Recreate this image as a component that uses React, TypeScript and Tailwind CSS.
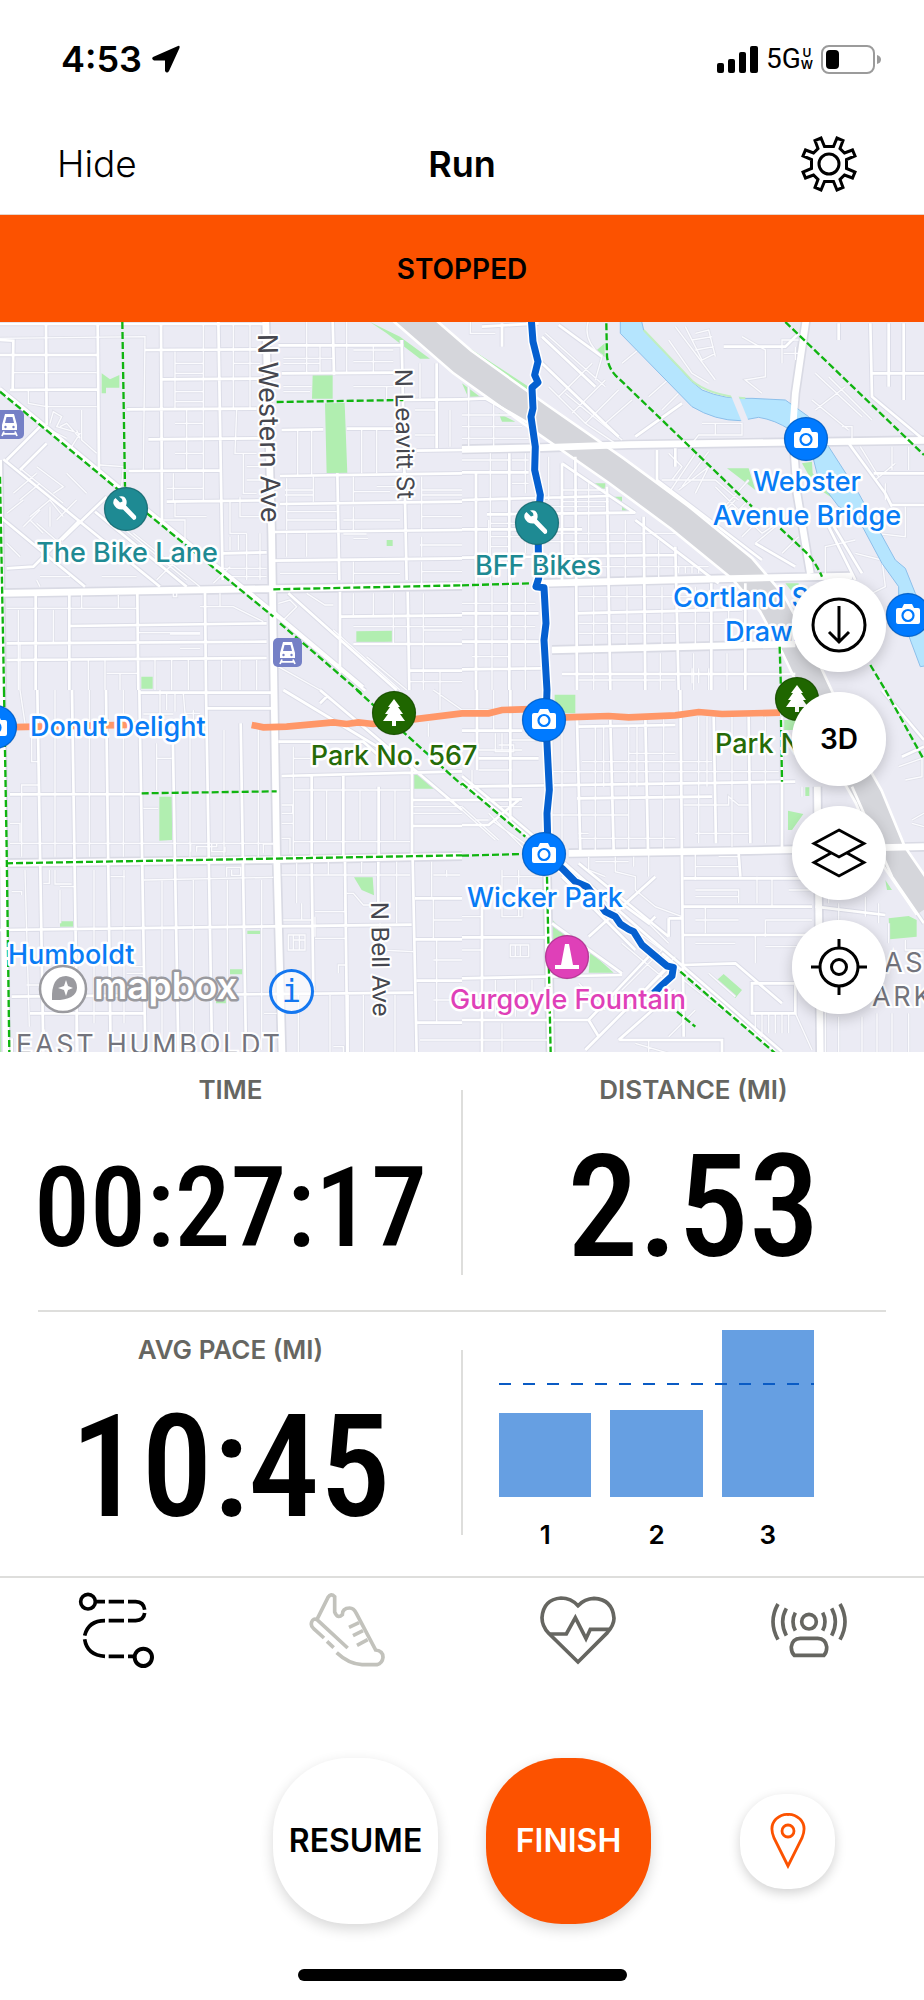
import React from 'react';

/* ---------- Map data ---------- */

// The street tiles are drawn at 3x and scaled down.
const TILE = 'scale(0.33333)';

type Tile = {
  origin: string;
  major: string;
  streets: string;
  alleys: string;
  parks: string;
};

const tiles: Tile[] = [
  {
    origin: 'translate(0 -6)',
    major: 'M0 820L815 806L1386 797M797 0L815 640L822 1110M-4 420L6 1110',
    streets:
      'M0 205L380 518L830 882L1090 1100M6 217L386 530L836 894L1096 1112M0 12H790M138 10L140 315M293 10L297 450M483 10L486 600M655 0L668 780M0 105H293M30 210L293 208M435 90L790 88M486 178L780 176M380 268L770 266M445 358L780 355M386 453L660 451M500 545L800 541M670 700L800 697M835 76L1210 76M845 160L1180 158M1205 240L1386 238M845 330L970 328M1040 326L1180 326M1250 392L1386 390M840 468L1386 460M840 552L1386 545M820 636L1386 630M820 722L1386 715M998 0L1002 165M1012 460L1018 780M1205 60L1220 780M1310 130V385M212 918L800 910M20 970L800 965M20 1020L800 1014M107 825V1110M208 825V1110M412 822L415 1110M615 818L618 1110M1020 815V1060M1223 815L1228 1110M1020 890L1386 886M1060 972H1386M1228 1052H1386M10 418L480 800M0 590L255 800M285 575L560 800M120 320L20 420M320 530L185 660M240 600L100 740L20 745M865 820L1190 1110M140 370L60 450M0 60L40 62L38 210',
    alleys:
      'M0 55L435 50L430 450M40 158H290M85 210V250L140 260H290M525 95V265M610 10V265M700 10V265M750 10V265M525 130H610M525 160H610M700 130H780M525 215H610M525 245H610M560 270V450M610 270V450M710 270L705 400H770M525 310H610M525 400H610M520 460V545M610 455V545M500 505H610M525 545V590H620M555 600V660M490 600H555V655M690 545V640H740M730 400V520H770M740 440H780M740 480H780M720 530V590H780M690 650V690M715 645V690M670 745H800M680 770H800M740 640V780M780 640V780M920 0V160M960 76V160M1040 0V160M1120 76V160M850 115H1000M850 130H960M1060 90H1180M1060 125H1180M850 200H935M850 215H930M1060 200H1180M893 330V465M935 330V465M1085 330V460M1130 330V460M1160 200V240M1260 130V235M1350 270V380M1245 270H1310M1245 345H1305M860 475V630M940 470V545M855 510H940M855 525H940M1060 470V545M1130 500H1210M1060 515H1170M1265 470V630M1265 510H1386M1265 525H1386M1060 560V630M860 575H1010M860 600H1010M1030 600H1200M1265 590H1386M1030 642H1100M1060 655H1104M1265 650V710M1260 675H1386M860 640V710M920 640V710M1060 725V790M1265 725V790M840 760H1010M1060 760H1200M1265 755H1386M55 870V1110M160 870V970M20 865H410M245 825V865M355 825V865M660 820V860H600M620 860H700L790 905M520 820V830H530V820M60 970V1110M415 938H600M510 942H600M540 985H600M265 1020V1110M315 1020V1110M360 1060V1110M320 1060H412M465 1020V1110M515 1020V1110M565 1020V1110M665 1020V1110M720 1020V1110M770 1020V1110M835 1040L960 1110M835 850L870 840L890 860L845 905M920 820L975 855H1000M1060 820V885M1120 820V885M1180 820V970M1270 820V1050M1060 920H1386M1270 930H1386M1100 1010L1220 1110M1000 930L1200 1110M1270 1050V1110M1320 1050V1110M1230 1085H1386M60 445L190 550M40 520L110 460M60 540L120 490M110 440L190 500L160 520M200 460L260 520M230 540L170 600M90 590L150 540L190 590M70 620L120 570M130 640L90 600M150 560V620M20 580L70 540M20 670L60 710M110 610L190 680M150 310L160 275L185 290L170 320L240 340L215 380M180 320L200 310L240 355L230 330M245 270V360L290 400M150 330L200 355M300 435L370 440L365 500M340 600L560 780M400 640L600 800M110 780L120 800M120 770H210M305 770H410M520 730L470 780M690 740L640 790',
    parks: 'M305 220V160L330 178L358 165V203H318V220ZM938 165L998 164V236H936ZM975 250L1034 249L1042 460L980 461ZM1160 660H1178V678H1160ZM1069 934L1179 932V965L1069 968ZM424 1070H458V1106H424ZM1110 6L1200 50L1290 116H1260L1160 40Z',
  },
  {
    origin: 'translate(1386 -6)',
    major: 'M0 388L240 383L500 374L1386 361M1032 0L1000 220L992 330L1005 520L1045 760M235 790L700 778L1170 768M270 990L1000 972',
    streets:
      'M0 238L70 235L200 310M0 457H200M0 540L440 528M75 583L520 578M0 628H360M0 713L640 705M0 880H230M0 965H230M0 1048L240 1045M42 455V1110M142 400V1110M300 430V780M340 410L345 1110M435 500L445 1110M545 590L550 1110M640 680L650 1110M748 790V1110M850 790V1110M340 880L840 868M300 1062H1000M230 120L470 350M290 15L420 110M60 20L230 10M120 80V10M520 350L660 250M1225 10L1230 230L1386 360M1230 160H1386M1130 10V60M1325 10V240M1280 10V200M1160 370L1270 520L1290 560M1235 460H1386M1290 555H1386M585 390V480L900 720M640 385V440M785 80H970L1010 40M240 50L400 200M1100 620L1180 780M1080 560L1200 760M880 670L1000 740M520 600L770 790M300 430L520 580',
    alleys:
      'M25 0V40H100M20 200V380M95 250V380M0 285H180M0 320H180M0 355H200M85 400V780M190 400V520M0 420H140M150 420H200M150 490H200M80 600V700M190 600V700M85 610H220M85 650H200M85 680H140M260 410V540M380 490V700M300 510H430M300 545H440M255 560H430M255 640H640M255 665H540M490 600V780M590 660V780M300 740H740M395 800V980M495 800V980M600 800V980M700 800V980M800 800V980M350 830H850M350 910H850M350 940H640M90 800V1110M190 800V1110M0 850H220M0 920H220M395 1000V1110M595 1000V1110M695 1000V1110M795 1000V1110M30 1010H140M350 1080H640M690 1045V1090M710 1045V1090M740 1045V1110M650 740V760M670 740V760M690 740V760M710 740V760M250 40L430 200M390 130L290 230M430 180L330 280M470 210L370 310M510 240L430 310M260 200L370 310L460 370M310 220L480 360M480 130L540 80M560 230L640 160M600 270L650 220M720 310H840V345H710L690 370M760 310V345M640 20L760 180M670 20L720 120L760 100M700 40L740 30L760 110M690 60L750 50M700 90L755 80M620 60L690 160L740 190M960 130V60H1010M1000 80V120M965 100H1010M1060 160L1200 290M1100 170L1230 300M1150 200L1060 270M1140 320H1170V360M1050 240L1160 330M620 400L660 440L630 480M700 400L620 520M740 395L660 500M740 440L700 520M600 480H760L830 540M650 510L740 440M860 480L770 580M820 540L740 620M760 500L900 640M800 600L860 540M900 640L960 600M840 650L900 590M880 670L940 620M960 700L1010 650M1090 780V680L1180 660M1180 700L1260 720L1270 800L1210 830M1240 480L1300 430M1270 490V540M1195 380L1250 470M1340 380V450M1290 380V450M1330 560V650L1240 640M380 0Q360 60 420 110L400 180M840 50L910 90V170L850 180L900 220',
    parks: 'M395 98L428 70V110ZM795 445H860L880 510ZM1020 430L1050 425L1052 460L1120 540L1060 500ZM0 70L200 200V235ZM540 485L800 690L720 640ZM390 490L430 490V530H480V572H520ZM0 190L60 235H20ZM110 280L160 305H120ZM240 290L380 370V380ZM410 395L540 500ZM970 790H1010V840Z',
  },
  {
    origin: 'translate(0 1104)',
    major: 'M822 0L830 500L846 1090M0 520L830 509L1386 498M4 0L18 1090',
    streets:
      'M112 0L130 1085M216 0L232 1085M318 0L332 1085M418 0L436 1085M518 120L535 1085M618 0L636 1085M722 100L738 1085M30 313L420 312M0 720L1235 704M35 920L1240 908M420 8H820M835 155H1090L1140 200M845 258L1386 244M935 258V500M1030 258V500M1136 290V500M1236 200V500M935 520L940 900M1035 515L1042 1090M1135 515V640M1238 510L1250 1090M850 0L1240 235M960 0L1386 360M1240 330H1386M1240 408H1386M1245 625H1386M1245 748H1386M1250 872H1386M1252 998H1386M35 1045V1090M90 970H430M230 920V1085M620 55H820M980 20L960 40',
    alleys:
      'M60 0L75 100M95 120V215H115M65 500V285H115M165 0V500M268 0V500M370 0V500M470 160V300M470 205H515M570 120V500M672 120V500M775 120V500M30 460H820M30 400H60V455M572 485V460M590 485V470H650V460M635 460V485H675V470M790 490V462H820M430 355H475M480 0V80M500 10V60M525 10V65M550 10L555 70H600M430 72H520M580 60V100M75 540L88 1010M148 540V580H130M165 540V582H215M180 590H225V670M180 600V700M282 540V1000M372 540V1000M332 560H375M486 570V1080M580 570V1080M682 570V1080M785 570V1080M432 570L820 562M680 560V532H722V556H695V540M845 345H878V370H845M845 400H878M845 445H870V490M880 170V500M880 300H1230M880 455H1230M980 298V450M1080 300V450M1185 300V450M880 205H930M845 555H1230M985 515V555M1085 515V550M1190 515V700M850 690H905V640M945 665H1035V620M890 690H935M865 735H915V780H865V735ZM880 735V780M898 735V780M880 750H915M945 745H1035M945 680V740M890 520V640M1040 610H1060L1090 645H1130M1140 700V780L1240 785M990 915V1090M1045 915V1090M1090 915V1090M1185 915V1090M895 915V1090M1015 850V825H1035M1240 350H1386M1240 370H1386M1300 0L1386 60M1285 100V140M1320 0V60M1295 515V620M1340 540V560M1300 555H1380M1300 690H1386M1300 625V750M1300 810H1386M1310 750V870M1300 930H1386M1310 875V995M1260 1050H1386M380 850H430M390 830H430M80 885H120M35 605H65V615M792 970H830M1000 1070H1030V1090',
    parks: 'M478 320H516V450L478 452ZM1238 254H1270L1318 296H1240ZM1062 562H1118L1122 616L1085 600ZM180 694H220V710H180ZM742 722H782V732H742ZM690 838H727V853H690ZM648 918H684V940H648ZM0 550L8 700L6 1090H0Z',
  },
  {
    origin: 'translate(1386 1104)',
    major: 'M320 490L860 482L1386 470M1066 290L1075 1090M255 560L266 1090',
    streets:
      'M0 258L200 425L560 740L960 1085M0 274L200 441M600 790L940 1085M45 0V240M145 0V400M345 90L355 480M445 90L455 480M550 80L558 480M655 0L665 1040M755 80L762 460M860 80L865 460M960 80V480M0 290L1000 275M350 110L640 105M0 122H180M50 205H230M0 330L180 328M345 325L750 320M0 405H80L170 330M665 565H1060M665 650H1050M665 735H1050M665 825L820 820L960 940M60 650V1090M0 742H250M0 865L480 855M265 860V745M830 490L835 560M0 990H380L560 800M1060 650L1270 675M1090 740H1110M1260 0L1386 150M1320 200L1386 170M300 560L520 780M350 520L620 740M620 685V740M620 685H660M450 620L560 700L580 680M380 740L580 560M270 700L480 850M420 640L520 730M370 1080L620 830M410 1040L380 990M470 1050L640 900M470 1050H780V1090M870 880H1000V970H870ZM1170 290L1290 560L1386 700',
    alleys:
      'M95 0V120M100 130V185H155V165H110M120 130V180M0 60H150M50 180H180M50 240H150M30 240V320M145 150H230M270 110V480M300 110V480M400 110V480M425 110V290M500 110V480M525 110V290M605 80V480M710 80V460M735 80V290M810 80V470M910 80V460M270 245H950M270 375H500M270 325V290M665 345H800V320L830 345H860M350 445H640M350 430H380M700 430H860M500 190H640M360 215H750M0 360L100 450M0 350L110 450M110 350H180M80 370L190 480M95 395L200 470M40 390H80M380 500V540L430 560M460 500V545L520 560V600L580 650L660 680M515 500V530M400 515H500M560 490V560M700 490V570M830 500H770M700 530H830M700 600H830V640M700 620H830M700 690H830M700 760H820M730 650V730M885 560V640M930 565V650M980 600H1050M910 690H1050M910 740V690M910 770H1050M880 735V820M120 540V680H180V650M120 640H240M160 600H240M120 560H240M170 680V540M145 765H200V800H145ZM160 765V800M175 765V800M0 680H60M0 780H60M100 870V980M160 870V980M210 870V980M0 930H250M0 1050H260M120 1000V1090M350 880L430 960M480 760L600 860M520 720L600 780M560 700L620 760M600 780L480 900M640 800L500 950M700 960L620 1040M560 1050V1090M520 1060L620 1090M700 880L790 950M740 850L820 920M665 870L780 960M880 970V1020L900 1040M900 970V1030M920 970V1030M940 970V1030M960 970V1030M980 970V1030M1000 970L1050 1080M1090 940V1090M1130 980V1090M1200 980V1090M1245 970V1090M1290 970V1090M1340 970V1090M1100 520V640M1130 640V700M1210 620V680M1250 640V700M1310 230L1380 205V260L1330 270M1350 390L1386 370M1350 400L1386 410M1020 290V320M1280 700V760M1330 750V780H1386',
    parks: 'M278 14H340V70H310L278 30ZM272 690L320 740H290L272 750ZM385 785L455 848H380ZM765 870L785 852L840 900L820 924ZM1280 685L1340 678L1364 690V740L1284 748ZM978 362L1024 372L990 420H978ZM955 90H1010V120H955ZM1030 292H1042V318H1030ZM1270 570L1290 600H1275Z',
  },
];

const bikePaths = [
  { origin: 'translate(0 -6)', d: 'M367 6L375 500M0 215L380 530L820 890M840 910L1090 1125M830 246L1210 240M820 808L1386 796M0 470L12 1110' },
  { origin: 'translate(1386 -6)', d: 'M0 796L205 790M433 10L435 110Q440 150 470 175L870 560M955 625L1030 695Q1060 725 1080 770M970 6L1386 405M953 980L957 1110M1225 1035L1270 1110' },
  { origin: 'translate(0 1104)', d: 'M12 0L20 480L28 1090M425 310L830 304M18 520L1386 496M1070 0L1386 285' },
  { origin: 'translate(1386 1104)', d: 'M0 280L190 440M0 497L180 492M255 560L266 1090M957 90L960 275M655 845L940 1090M645 965L700 1010M1270 0L1386 210' },
];

const RAILWAY =
  'M-190 -40L0 125L230 290L460 450L650 590L840 745L930 850L1000 980L1080 1150L1140 1290L1220 1430L1290 1600L1400 1760';

const ROUTE =
  'M208 0L213 65L228 125L218 165L228 187L210 203L213 265L207 290L220 380L218 450L235 525L228 600L230 775L222 800L246 803L252 910L246 960L255 1110L252 1210L262 1410L255 1480L257 1550L247 1600L300 1645L340 1685L375 1700L430 1775L460 1790L475 1812L500 1828L515 1835L540 1875L615 1938L634 1942L630 1968L600 1995L575 2020';

type LabelProps = { x: number; y: number; color: string; middle?: boolean; children: string };

const PlaceLabel: React.FC<LabelProps> = ({ x, y, color, middle, children }) => (
  <text
    x={x}
    y={y}
    fill={color}
    textAnchor={middle ? 'middle' : 'start'}
    stroke="#fff"
    strokeWidth="5"
    strokeLinejoin="round"
    paintOrder="stroke"
    className="text-[27px] font-medium"
  >
    {children}
  </text>
);

type PinProps = { x: number; y: number; color: string; children: React.ReactNode };

const Pin: React.FC<PinProps> = ({ x, y, color, children }) => (
  <g transform={`translate(${x} ${y})`}>
    <circle r="22" fill={color} />
    <circle r="21.5" fill="none" stroke="#000" strokeOpacity="0.18" strokeWidth="1.5" />
    {children}
  </g>
);

const Camera = () => (
  <>
    <path d="M-10 -7H-6L-4 -11H4L6 -7H10Q12 -7 12 -5V7Q12 9 10 9H-10Q-12 9 -12 7V-5Q-12 -7 -10 -7Z" fill="#fff" />
    <circle cy="0.5" r="5.5" fill="none" stroke="#007aff" strokeWidth="2.2" />
  </>
);

const WrenchGlyph = () => (
  <path
    d="M-12.500 -5Q-13.500 -9 -10.500 -11L-6 -6.500L-3.500 -7.500L-4 -10L-7 -12.500Q-1 -14 0.500 -8.500Q1 -6 0 -3.500L10 7Q11 11 7.500 11L-3 0.500Q-10 1 -12.500 -5Z"
    fill="#fff"
  />
);

const Tree = () => (
  <path d="M0 -14L6 -6H4L9 1H6L11 8H2V13H-2V8H-11L-6 1H-9L-4 -6H-6Z" fill="#fff" />
);

const Station: React.FC<{ x: number; y: number }> = ({ x, y }) => (
  <g transform={`translate(${x} ${y})`}>
    <rect width="29" height="29" rx="5" fill="#7580c6" />
    <path d="M10 4H19L22 15V20H7V15Z" fill="#fff" />
    <path d="M11.500 7H17.500L19 13H10Z" fill="#7580c6" />
    <circle cx="10.500" cy="17" r="1.200" fill="#7580c6" />
    <circle cx="18.500" cy="17" r="1.200" fill="#7580c6" />
    <path d="M9 21.500L7 26M20 21.500L22 26M8 23.800H21" stroke="#fff" strokeWidth="1.800" />
  </g>
);

const StreetMap = () => (
  <svg
    viewBox="0 0 924 730"
    preserveAspectRatio="xMidYMid slice"
    className="block h-[730px] w-full font-['Inter',sans-serif]"
    role="img"
    aria-label="Route map"
  >
    <rect width="924" height="730" fill="#ebebf4" />
    <g transform={TILE} fill="none">
      {tiles.map((t) => (
        <g key={t.origin} transform={t.origin}>
          <path d={t.parks} fill="#b1eeb0" />
          <path d={t.alleys} stroke="#e0e1ea" strokeWidth="9" />
          <path d={t.streets} stroke="#dcdde8" strokeWidth="14" />
          <path d={t.major} stroke="#d9dae4" strokeWidth="30" />
          <path d={t.alleys} stroke="#fbfbfe" strokeWidth="4" />
        </g>
      ))}

      {/* North branch of the river */}
      <g transform="translate(1386 -6)">
        <path
          d="M475 0V40L690 260Q760 302 835 302L890 292Q940 300 985 330L1050 400L1070 480L1130 560L1180 580L1260 730L1310 800L1310 860L1345 960L1375 1040L1400 1036V900L1360 820L1330 745L1300 720L1190 520L1100 380L1040 290L970 240L870 235Q790 240 720 210L690 185L545 30L538 0Z"
          fill="#b5e5fe"
          stroke="#8dbfea"
          strokeWidth="3"
        />
        <path d="M545 30L690 182Q740 225 850 235" stroke="#c0efc0" strokeWidth="6" />
        <path d="M815 220L850 305" stroke="#ebebf4" strokeWidth="20" />
        <path d={RAILWAY} stroke="#fff" strokeWidth="94" />
        <path d={RAILWAY} stroke="#d5d6db" strokeWidth="78" />
      </g>

      {tiles.map((t) => (
        <g key={t.origin} transform={t.origin} stroke="#fff">
          <path d={t.streets} strokeWidth="8" />
          <path d={t.major} strokeWidth="20" />
        </g>
      ))}

      {bikePaths.map((p) => (
        <path key={p.origin} transform={p.origin} d={p.d} stroke="#10b410" strokeWidth="7" strokeDasharray="21 9" />
      ))}

      {/* Segment and recorded route */}
      <path
        d="M0 1216L420 1208M755 1209L790 1216L860 1214L1000 1201L1040 1206L1075 1201L1120 1206L1240 1192L1386 1174L1466 1174L1506 1164L1631 1160L1696 1186L1826 1182L1886 1186L2026 1180L2096 1170L2166 1176L2340 1172"
        stroke="#ff9768"
        strokeWidth="20"
      />
      <path transform="translate(1386 -6)" d={ROUTE} stroke="#fff" strokeWidth="30" strokeLinejoin="round" />
      <path transform="translate(1386 -6)" d={ROUTE} stroke="#0560d0" strokeWidth="21" strokeLinejoin="round" />
    </g>

    <Station x={-5} y={88} />
    <Station x={273} y={316} />

    <g fill="#46474f" stroke="#fff" strokeWidth="4" paintOrder="stroke" strokeLinejoin="round">
      <text transform="translate(258 12) rotate(89)" className="text-[27px]">N Western Ave</text>
      <text transform="translate(395 47) rotate(89)" className="text-[24px]">N Leavitt St</text>
      <text transform="translate(371 580) rotate(89)" className="text-[24px]">N Bell Ave</text>
    </g>
    <g fill="#73747d" stroke="#fff" strokeWidth="4" paintOrder="stroke" className="text-[27px] tracking-widest">
      <text x="16" y="732">EAST HUMBOLDT</text>
      <text x="884" y="650">AS</text>
      <text x="872" y="684">ARK</text>
    </g>

    <PlaceLabel x={127} y={240} color="#1e8a93" middle>The Bike Lane</PlaceLabel>
    <PlaceLabel x={538} y={253} color="#1e8a93" middle>BFF Bikes</PlaceLabel>
    <PlaceLabel x={807} y={169} color="#087cf5" middle>Webster</PlaceLabel>
    <PlaceLabel x={807} y={203} color="#087cf5" middle>Avenue Bridge</PlaceLabel>
    <PlaceLabel x={673} y={285} color="#087cf5">Cortland St</PlaceLabel>
    <PlaceLabel x={725} y={319} color="#087cf5">Drawbridge</PlaceLabel>
    <PlaceLabel x={30} y={414} color="#087cf5">Donut Delight</PlaceLabel>
    <PlaceLabel x={394} y={443} color="#266b08" middle>Park No. 567</PlaceLabel>
    <PlaceLabel x={715} y={431} color="#266b08">Park No.</PlaceLabel>
    <PlaceLabel x={545} y={585} color="#087cf5" middle>Wicker Park</PlaceLabel>
    <PlaceLabel x={8} y={642} color="#087cf5">Humboldt</PlaceLabel>
    <PlaceLabel x={568} y={687} color="#df40b8" middle>Gurgoyle Fountain</PlaceLabel>

    <Pin x={126} y={187} color="#1e8a93"><WrenchGlyph /></Pin>
    <Pin x={537} y={201} color="#1e8a93"><WrenchGlyph /></Pin>
    <Pin x={806} y={117} color="#007aff"><Camera /></Pin>
    <Pin x={908} y={293} color="#007aff"><Camera /></Pin>
    <Pin x={544} y={398} color="#007aff"><Camera /></Pin>
    <Pin x={544} y={532} color="#007aff"><Camera /></Pin>
    <Pin x={-5} y={405} color="#007aff"><Camera /></Pin>
    <Pin x={394} y={391} color="#1f6600"><Tree /></Pin>
    <Pin x={797} y={377} color="#1f6600"><Tree /></Pin>
    <Pin x={567} y={635} color="#df40b8">
      <path d="M-2 -13H2L6 8H12V12H-12V8H-6Z" fill="#fff" />
    </Pin>
  </svg>
);

const MapControl: React.FC<{ label: string; children: React.ReactNode }> = ({ label, children }) => (
  <button
    aria-label={label}
    className="flex size-[94px] items-center justify-center rounded-[46px] bg-white text-[28px] font-semibold shadow-[0_4px_14px_rgba(0,0,0,0.2)]"
  >
    {children}
  </button>
);

/* ---------- Icons ---------- */

const GearIcon = () => (
  <svg viewBox="-28 -28 56 56" className="size-14" fill="none" stroke="currentColor" strokeWidth="3">
    <circle r="10" />
    <path d="M-4.500 -17.500H4.500L8 -26L14 -23.500L11 -15.500L15.500 -11L23.500 -14L26 -8L17.500 -4.500V4.500L26 8L23.500 14L15.500 11L11 15.500L14 23.500L8 26L4.500 17.500H-4.500L-8 26L-14 23.500L-11 15.500L-15.500 11L-23.500 14L-26 8L-17.500 4.500V-4.500L-26 -8L-23.500 -14L-15.500 -11L-11 -15.500L-14 -23.500L-8 -26Z" />
  </svg>
);

const RouteIcon = () => (
  <svg viewBox="231 64 228 228" className="size-[76px]" fill="none" stroke="#000" strokeWidth="11">
    <circle cx="261" cy="93" r="22" />
    <circle cx="427" cy="260" r="26" strokeWidth="12" />
    <path d="M284 93H312M323 93H369M381 93H404Q428 94 431 117M431 127Q428 149 404 150H381M369 150H323M312 150Q262 150 251 195M251 206Q258 254 312 257M323 257H369M381 257H402" />
  </svg>
);

const ShoeIcon = () => (
  <svg viewBox="926 68 228 228" className="size-[76px]" fill="none" stroke="#c2c2bc" strokeWidth="11">
    <path d="M950 150L983 84Q992 70 1003 82V128Q1012 150 1026 136Q1026 116 1048 116Q1060 116 1068 132L1126 242Q1148 244 1148 264Q1146 282 1130 286H1085Q1045 284 1009 250M1042 236L950 151Q938 146 934 158Q930 170 940 178L971 206M980 216L1000 235" />
    <path d="M1046 174L1076 160M1058 199L1088 184M1070 228L1102 211" />
  </svg>
);

const HeartIcon = () => (
  <svg viewBox="232 66 228 228" className="size-[76px]" fill="none" stroke="#666661" strokeWidth="11">
    <path d="M346 276L258 190Q238 168 238 143Q242 88 295 84Q325 84 346 107Q366 86 394 85Q450 88 454 145Q454 165 434 188Z" />
    <path d="M260 192H311L338 143L370 206L383 178H440" />
  </svg>
);

const BeaconIcon = () => (
  <svg viewBox="926 74 228 228" className="size-[76px]" fill="none" stroke="#666661" strokeWidth="11">
    <circle cx="1040" cy="163" r="22" />
    <path d="M996 264Q986 254 987 238Q990 214 1014 213H1066Q1090 214 1093 238Q1094 254 1085 264ZM999 136Q985 163 999 190M972 123Q950 163 972 205M947 110Q917 163 947 217M1081 136Q1095 163 1081 190M1108 123Q1130 163 1108 205M1133 110Q1163 163 1133 217" />
  </svg>
);

const tabs = [
  { label: 'Routes', icon: <RouteIcon /> },
  { label: 'Shoes', icon: <ShoeIcon /> },
  { label: 'Heart rate', icon: <HeartIcon /> },
  { label: 'Beacon', icon: <BeaconIcon /> },
];

/* ---------- Stats ---------- */

const splits = [
  { mile: 1, height: 84 },
  { mile: 2, height: 87 },
  { mile: 3, height: 167 },
];

const Stat: React.FC<{ label: string; value: string; size: string }> = ({ label, value, size }) => (
  <div className="flex flex-col items-center pt-5">
    <h2 className="text-[26px] leading-9 font-semibold text-[#666661]">{label}</h2>
    <p className={`flex h-[200px] items-center leading-none font-['Roboto_Condensed','Roboto',sans-serif] font-medium ${size}`}>{value}</p>
  </div>
);

const SplitsChart = () => (
  <div className="pt-[18px] pl-9">
    <div className="relative flex h-[167px] w-[315px] items-end gap-[19px]">
      {splits.map((s) => (
        <div key={s.mile} className="flex-1 bg-[#669fe2]" style={{ height: s.height }} />
      ))}
      <svg className="absolute top-[53px] left-0 h-[3px] w-full" aria-hidden="true">
        <path d="M0 1H315" stroke="#0a5bc4" strokeWidth="2" strokeDasharray="12 12" />
      </svg>
    </div>
    <div className="mt-5 flex w-[315px] gap-[19px] text-[26px] leading-9 font-semibold">
      {splits.map((s) => (
        <span key={s.mile} className="flex-1 text-center">{s.mile}</span>
      ))}
    </div>
  </div>
);

const Divider = () => <div className="mt-[38px] h-[185px] w-[2px] bg-[#dededc]" />;

export default function App() {
  return (
    <div className="flex min-h-screen flex-col bg-white font-['Inter',sans-serif] text-black">
      {/* Status bar */}
      <div className="flex h-[118px] items-center justify-between pr-[43px] pl-[61px]">
        <div className="flex items-center gap-2.5">
          <span className="text-[36px] font-semibold">4:53</span>
          <svg viewBox="0 0 28 28" className="size-7" aria-hidden="true">
            <path d="M26 1L1 12Q-1 14 2 15.500L13 15.500V26Q15 29 17 26L27.500 3Q28 0 26 1Z" />
          </svg>
        </div>
        <div className="flex items-center gap-2">
          <svg viewBox="0 0 41 27" className="h-[27px] w-[41px]" aria-hidden="true">
            <rect y="17" width="7" height="10" rx="2" />
            <rect x="11" y="13" width="7" height="14" rx="2" />
            <rect x="22" y="6" width="7" height="21" rx="2" />
            <rect x="33" width="8" height="27" rx="2" />
          </svg>
          <div className="flex items-center">
            <span className="font-['Roboto',sans-serif] text-[28px] leading-8">5G</span>
            <span className="flex flex-col text-center text-[12px] leading-3 font-semibold">
              <span>U</span>
              <span>W</span>
            </span>
          </div>
          <svg viewBox="0 0 60 29" className="h-[29px] w-[60px]" aria-hidden="true">
            <rect x="1" y="1" width="52" height="27" rx="7" fill="none" stroke="#9b9b9b" strokeWidth="2" />
            <rect x="5" y="5" width="13" height="19" rx="4" />
            <path d="M56 10Q60 11 60 14.500Q60 18 56 19Z" fill="#9b9b9b" />
          </svg>
        </div>
      </div>

      {/* Title bar */}
      <header className="grid h-[97px] grid-cols-[1fr_auto_1fr] items-center border-b border-[#e6d5cb] px-[57px] pb-[5px]">
        <button className="justify-self-start text-[37px] font-light">Hide</button>
        <h1 className="text-[36px] font-semibold">Run</h1>
        <button aria-label="Settings" className="justify-self-end px-2.5"><GearIcon /></button>
      </header>

      <div role="status" className="flex h-[107px] items-center justify-center bg-[#fc5200] text-[28px] font-semibold">
        STOPPED
      </div>

      {/* Map */}
      <section className="relative overflow-hidden">
        <StreetMap />
        <div className="absolute bottom-[38px] left-[38px] flex items-center">
          <a href="#mapbox" aria-label="Mapbox">
            <svg viewBox="0 0 206 50" className="h-[50px] w-[206px]">
              <circle cx="25" cy="25" r="23" fill="#fff" stroke="#9a9a9f" strokeWidth="2.500" />
              <path d="M14 36Q13 12 28 12Q39 13 39 24Q38 37 14 36Z" fill="#9a9a9f" />
              <path d="M28 16L30 22L35 24L30 26L28 32L26 26L20 24L26 22Z" fill="#fff" />
              <text x="56" y="35" fill="#fff" stroke="#9a9a9f" strokeWidth="5" strokeLinejoin="round" paintOrder="stroke" className="text-[37px] font-semibold">
                mapbox
              </text>
            </svg>
          </a>
          <button aria-label="Map attribution" className="mt-1 ml-[25px] flex size-[45px] items-center justify-center rounded-full border-[3px] border-[#1477f0] bg-white/60 font-['DejaVu_Sans_Mono',monospace] text-[32px] leading-none text-[#1477f0]">
            i
          </button>
        </div>
        <div className="absolute right-[38px] bottom-[38px] flex flex-col gap-5">
          <MapControl label="Download map">
            <svg viewBox="-28 -28 56 56" className="size-14" fill="none" stroke="currentColor" strokeWidth="3">
              <circle r="26" />
              <path d="M0 -19V17M-10 7L0 17L10 7" />
            </svg>
          </MapControl>
          <MapControl label="3D view">3D</MapControl>
          <MapControl label="Map layers">
            <svg viewBox="-28 -28 56 56" className="size-14" fill="none" stroke="currentColor" strokeWidth="2.800">
              <path d="M0 -23L25 -9.500L0 4L-25 -9.500Z" />
              <path d="M-8 0L-25 9.500L0 23L25 9.500L8 0" />
            </svg>
          </MapControl>
          <MapControl label="Center on me">
            <svg viewBox="-28 -28 56 56" className="size-14" fill="none" stroke="currentColor" strokeWidth="3">
              <circle r="19" />
              <circle r="7.500" />
              <path d="M0 -28V-19M0 28V19M-28 0H-19M28 0H19" />
            </svg>
          </MapControl>
        </div>
      </section>

      {/* Stats */}
      <section>
        <div className="grid h-[258px] grid-cols-[1fr_2px_1fr]">
          <Stat label="TIME" value="00:27:17" size="text-[112px]" />
          <Divider />
          <Stat label="DISTANCE (MI)" value="2.53" size="text-[142px]" />
        </div>
        <div className="mx-[38px] h-[2px] bg-[#dededc]" />
        <div className="grid h-[264px] grid-cols-[1fr_2px_1fr]">
          <Stat label="AVG PACE (MI)" value="10:45" size="text-[142px]" />
          <Divider />
          <SplitsChart />
        </div>
      </section>

      <nav className="grid grid-cols-4 border-t-2 border-[#dededc] py-3.5">
        {tabs.map((t) => (
          <button key={t.label} aria-label={t.label} className="flex justify-center">
            {t.icon}
          </button>
        ))}
      </nav>

      <div className="mt-[76px] grid grid-cols-[1fr_auto_1fr] items-center">
        <div />
        <div className="flex gap-12">
          <button className="h-[166px] w-[165px] rounded-[76px] bg-white text-[32px] font-semibold shadow-[0_5px_14px_rgba(0,0,0,0.16)]">
            RESUME
          </button>
          <button className="h-[166px] w-[165px] rounded-[76px] bg-[#fc5200] text-[32px] font-semibold text-white shadow-[0_5px_14px_rgba(0,0,0,0.16)]">
            FINISH
          </button>
        </div>
        <button aria-label="Mark location" className="flex size-[95px] items-center justify-center justify-self-center rounded-[44px] bg-white shadow-[0_4px_12px_rgba(0,0,0,0.18)]">
          <svg viewBox="0 0 36 56" className="h-14 w-9" fill="none" stroke="#fc5200" strokeWidth="2.800">
            <circle cx="18" cy="18" r="6" />
            <path d="M18 53L4 25Q-1 13 6 6Q12 1 18 1.500Q24 1 30 6Q37 13 32 25Z" />
          </svg>
        </button>
      </div>

      <div className="mx-auto mt-[45px] mb-[19px] h-3 w-[329px] rounded-full bg-black" />
    </div>
  );
}
